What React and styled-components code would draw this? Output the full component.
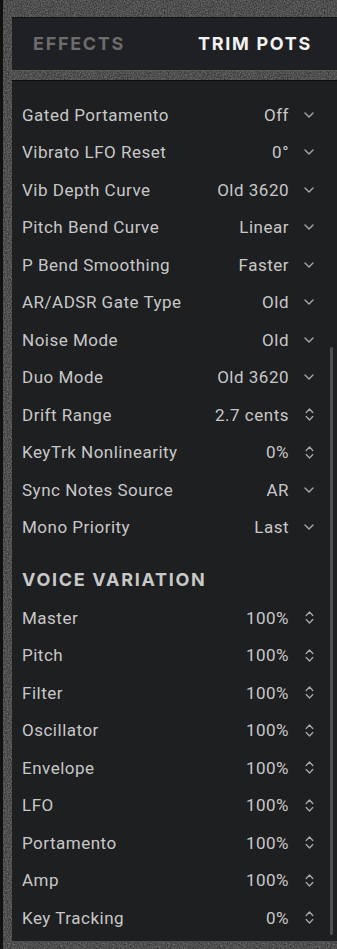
import React from "react";
import styled, { createGlobalStyle } from "styled-components";

const noise = `url("data:image/svg+xml;utf8,<svg xmlns='http://www.w3.org/2000/svg' width='160' height='160'><filter id='n'><feTurbulence type='fractalNoise' baseFrequency='0.7' numOctaves='3' stitchTiles='stitch'/><feColorMatrix values='0 0 0 0 0.6  0 0 0 0 0.6  0 0 0 0 0.6  0 0 0 0.55 0'/></filter><rect width='100%' height='100%' filter='url(%23n)'/></svg>")`;

const Global = createGlobalStyle`
  html, body { margin: 0; padding: 0; }
  body {
    background: #202020;
    font-family: Roboto, Inter, "Liberation Sans", sans-serif;
    -webkit-font-smoothing: antialiased;
  }
`;

const Page = styled.div`
  width: 337px;
  height: 949px;
  box-sizing: border-box;
  padding: 17px 0 0 12px;
  overflow: hidden;
  background-color: #202020;
  background-image: ${noise};
  box-shadow: inset 3px 0 0 #111111;
`;

const Header = styled.div`
  height: 53px;
  background: #1f2023;
  display: flex;
  align-items: center;
  gap: 73px;
  padding-left: 21px;
  box-shadow: inset 0 1px 0 #151515;
`;

const Tab = styled.div`
  font-family: Inter, Roboto, sans-serif;
  font-size: 18px;
  font-weight: 700;
  letter-spacing: 1.7px;
  color: ${(p) => (p.$active ? "#f2f2f2" : "#6c6c6c")};
`;

const Divider = styled.div`
  height: 9px;
  border-top: 1px solid #5a5a5a;
  border-bottom: 1px solid #0c0c0c;
`;

const Panel = styled.div`
  position: relative;
  height: 861px;
  box-sizing: border-box;
  background: #1e1f21;
  padding: 15px 0 0 10px;
  border-bottom: 1px solid #4e4e4e;
  overflow: hidden;
`;

const Row = styled.div`
  height: 37.5px;
  display: flex;
  align-items: center;
  padding-right: 18px;
  font-size: 17px;
  letter-spacing: 0.5px;
  color: #c8c8c8;
`;

const Label = styled.div`
  flex: 1;
  white-space: nowrap;
`;

const Value = styled.div`
  white-space: nowrap;
  text-align: right;
`;

const IconBox = styled.div`
  width: 20px;
  margin-left: 10px;
  display: flex;
  justify-content: center;
  align-items: center;
`;

const Heading = styled.div`
  height: 53px;
  box-sizing: border-box;
  padding-top: 21.5px;
  line-height: 24px;
  font-family: Inter, Roboto, sans-serif;
  font-size: 18px;
  font-weight: 700;
  letter-spacing: 1.7px;
  color: #c8c8c8;
`;

const Scrollbar = styled.div`
  position: absolute;
  right: 4px;
  top: 266px;
  width: 3px;
  height: 588px;
  border-radius: 2px;
  background: #4f4f4f;
`;

const Down = () => (
  <svg width="10" height="6" viewBox="0 0 10 6">
    <path d="M1 1 L5 5 L9 1" fill="none" stroke="#a8a8a8" strokeWidth="1.4" strokeLinecap="round" strokeLinejoin="round" />
  </svg>
);

const UpDown = () => (
  <svg width="9" height="15" viewBox="0 0 9 15">
    <path d="M1.2 5.5 L4.5 2 L7.8 5.5 M1.2 9.5 L4.5 13 L7.8 9.5" fill="none" stroke="#a8a8a8" strokeWidth="1.3" strokeLinecap="round" strokeLinejoin="round" />
  </svg>
);

const trims = [
  ["Gated Portamento", "Off", "d"],
  ["Vibrato LFO Reset", "0°", "d"],
  ["Vib Depth Curve", "Old 3620", "d"],
  ["Pitch Bend Curve", "Linear", "d"],
  ["P Bend Smoothing", "Faster", "d"],
  ["AR/ADSR Gate Type", "Old", "d"],
  ["Noise Mode", "Old", "d"],
  ["Duo Mode", "Old 3620", "d"],
  ["Drift Range", "2.7 cents", "u"],
  ["KeyTrk Nonlinearity", "0%", "u"],
  ["Sync Notes Source", "AR", "d"],
  ["Mono Priority", "Last", "d"],
];

const variation = [
  ["Master", "100%"],
  ["Pitch", "100%"],
  ["Filter", "100%"],
  ["Oscillator", "100%"],
  ["Envelope", "100%"],
  ["LFO", "100%"],
  ["Portamento", "100%"],
  ["Amp", "100%"],
  ["Key Tracking", "0%"],
];

const Param = ({ label, value, kind }) => (
  <Row>
    <Label>{label}</Label>
    <Value>{value}</Value>
    <IconBox>{kind === "u" ? <UpDown /> : <Down />}</IconBox>
  </Row>
);

export default function App() {
  return (
    <>
      <Global />
      <Page>
        <Header>
          <Tab>EFFECTS</Tab>
          <Tab $active>TRIM POTS</Tab>
        </Header>
        <Divider />
        <Panel>
          {trims.map(([l, v, k]) => (
            <Param key={l} label={l} value={v} kind={k} />
          ))}
          <Heading>VOICE VARIATION</Heading>
          {variation.map(([l, v]) => (
            <Param key={l} label={l} value={v} kind="u" />
          ))}
          <Scrollbar />
        </Panel>
      </Page>
    </>
  );
}
